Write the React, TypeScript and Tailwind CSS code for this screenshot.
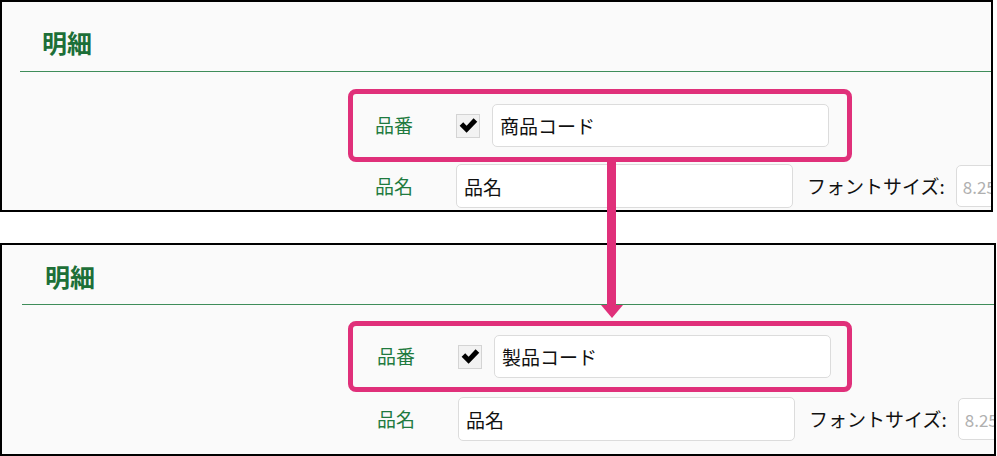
import React from "react";

const FONT = "font-['Noto_Sans_CJK_JP','Noto_Sans',sans-serif]";

type PanelProps = {
  code: string;
  box: string;
  head: string;
  pink: string;
  row: string;
};

function CheckBox() {
  return (
    <div className="w-[24px] h-[24px] shrink-0 border border-[#d4d4d4] bg-[#f2f2f2] flex items-center justify-center">
      <svg width="19" height="17" viewBox="0 0 18 16">
        <path d="M0.6 8.2 L4 5 L7.2 8.2 L13.8 1.2 L17.3 4.4 L7.2 14.8 Z" fill="#000" />
      </svg>
    </div>
  );
}

function Panel({ code, box, head, pink, row }: PanelProps) {
  return (
    <div className={`${box} border-2 border-black bg-[#fafafa] overflow-hidden shrink-0`}>
      {/* section heading */}
      <div className={`${head} border-b border-[#3f8d5a]`}>
        <h2 className="text-[25px] leading-[32px] font-bold text-[#1d6f38]">明細</h2>
      </div>

      <div className="pl-[346px]">
        {/* highlighted row */}
        <div className={`${pink} w-[504px] border-[5px] border-[#e0307a] rounded-[8px] flex items-center`}>
          <span className="w-[81px] shrink-0 text-[19px] text-[#1f7a3f]">品番</span>
          <CheckBox />
          <input
            readOnly
            value={code}
            className="ml-[12px] w-[337px] h-[43px] shrink-0 border border-[#dcdcdc] rounded-[5px] bg-white px-[7px] text-[19px] text-[#111] outline-none"
          />
        </div>

        {/* name row */}
        <div className={`${row} flex items-center whitespace-nowrap`}>
          <span className="w-[81px] shrink-0 text-[19px] text-[#1f7a3f]">品名</span>
          <input
            readOnly
            value="品名"
            className="w-[337px] h-[44px] shrink-0 border border-[#dcdcdc] rounded-[5px] bg-white px-[7px] text-[19px] text-[#111] outline-none"
          />
          <span className="ml-[14px] shrink-0 text-[19px] text-[#111]">フォントサイズ:</span>
          <input
            readOnly
            placeholder="8.25"
            className="ml-[11px] w-[80px] h-[42px] shrink-0 border border-[#dcdcdc] rounded-[5px] bg-white px-[6px] text-[17px] placeholder:text-[#b0b0b0] outline-none"
          />
        </div>
      </div>
    </div>
  );
}

export default function App() {
  const panels: PanelProps[] = [
    {
      code: "商品コード",
      box: "w-[993px] h-[212px]",
      head: "ml-[18px] h-[70px] pt-[24px] pl-[22px]",
      pink: "mt-[17px] h-[73px] pl-[22px]",
      row: "mt-[2px] pl-[27px]",
    },
    {
      code: "製品コード",
      box: "w-[996px] h-[213px]",
      head: "ml-[20px] h-[60px] pt-[15px] pl-[23px]",
      pink: "mt-[16px] h-[71px] pl-[24px]",
      row: "mt-[5px] pl-[29px]",
    },
  ];

  return (
    <div className={`relative w-[997px] h-[456px] bg-white flex flex-col gap-[31px] ${FONT}`}>
      {panels.map((p) => (
        <Panel key={p.code} {...p} />
      ))}

      {/* arrow between the two highlights */}
      <svg className="absolute left-[600px] top-[160px]" width="24" height="160" viewBox="0 0 24 160">
        <rect x="7" y="0" width="9" height="148" fill="#e0307a" />
        <polygon points="1,145 23,145 12,158" fill="#e0307a" />
      </svg>
    </div>
  );
}
